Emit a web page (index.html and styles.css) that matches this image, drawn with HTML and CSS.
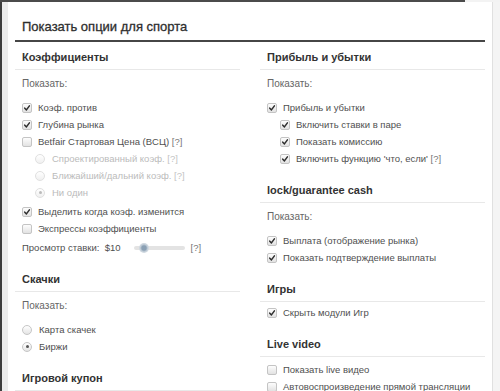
FILE: index.html
```html
<!DOCTYPE html>
<html lang="ru">
<head>
<meta charset="utf-8">
<link rel="stylesheet" href="styles.css">
</head>
<body>
<div class="topline"></div>
<div class="page">
  <div class="lstrip"></div>
  <div class="panel">
    <h1 class="title">Показать опции для спорта</h1>
    <div class="cols">
      <div class="col">
        <section class="sec">
          <h2 class="sh">Коэффициенты</h2>
          <div class="lbl">Показать:</div>
          <ul class="opts">
            <li class="row"><span class="cb on"><svg viewBox="0 0 10 10"><path d="M2.2 5.2 L4.3 7.4 L8 2.4"/></svg></span>Коэф. против</li>
            <li class="row"><span class="cb on"><svg viewBox="0 0 10 10"><path d="M2.2 5.2 L4.3 7.4 L8 2.4"/></svg></span>Глубина рынка</li>
            <li class="row"><span class="cb"></span>Betfair Стартовая Цена (BCЦ)&nbsp;<span class="q">[?]</span></li>
            <li class="radios">
              <div class="row sub dis"><span class="rd"></span>Спроектированный коэф. <span class="q">&nbsp;[?]</span></div>
              <div class="row sub dis"><span class="rd"></span>Ближайший/дальний коэф. <span class="q">&nbsp;[?]</span></div>
              <div class="row sub dis"><span class="rd on"></span>Ни один</div>
            </li>
            <li class="row"><span class="cb on"><svg viewBox="0 0 10 10"><path d="M2.2 5.2 L4.3 7.4 L8 2.4"/></svg></span>Выделить когда коэф. изменится</li>
            <li class="row"><span class="cb"></span>Экспрессы коэффициенты</li>
            <li class="row slrow">Просмотр ставки:&nbsp; $10<span class="track"><span class="knob"></span></span><span class="q">[?]</span></li>
          </ul>
        </section>
        <section class="sec">
          <h2 class="sh">Скачки</h2>
          <div class="lbl">Показать:</div>
          <ul class="opts">
            <li class="row"><span class="rd"></span>Карта скачек</li>
            <li class="row"><span class="rd on"></span>Биржи</li>
          </ul>
        </section>
        <section class="sec">
          <h2 class="sh">Игровой купон</h2>
        </section>
      </div>
      <div class="col">
        <section class="sec">
          <h2 class="sh">Прибыль и убытки</h2>
          <div class="lbl">Показать:</div>
          <ul class="opts">
            <li class="row"><span class="cb on"><svg viewBox="0 0 10 10"><path d="M2.2 5.2 L4.3 7.4 L8 2.4"/></svg></span>Прибыль и убытки</li>
            <li class="row sub"><span class="cb on"><svg viewBox="0 0 10 10"><path d="M2.2 5.2 L4.3 7.4 L8 2.4"/></svg></span>Включить ставки в паре</li>
            <li class="row sub"><span class="cb on"><svg viewBox="0 0 10 10"><path d="M2.2 5.2 L4.3 7.4 L8 2.4"/></svg></span>Показать комиссию</li>
            <li class="row sub"><span class="cb on"><svg viewBox="0 0 10 10"><path d="M2.2 5.2 L4.3 7.4 L8 2.4"/></svg></span>Включить функцию 'что, если'&nbsp;<span class="q">[?]</span></li>
          </ul>
        </section>
        <section class="sec">
          <h2 class="sh">lock/guarantee cash</h2>
          <div class="lbl">Показать:</div>
          <ul class="opts">
            <li class="row"><span class="cb on"><svg viewBox="0 0 10 10"><path d="M2.2 5.2 L4.3 7.4 L8 2.4"/></svg></span>Выплата (отображение рынка)</li>
            <li class="row"><span class="cb on"><svg viewBox="0 0 10 10"><path d="M2.2 5.2 L4.3 7.4 L8 2.4"/></svg></span>Показать подтверждение выплаты</li>
          </ul>
        </section>
        <section class="sec">
          <h2 class="sh">Игры</h2>
          <ul class="opts tight">
            <li class="row"><span class="cb on"><svg viewBox="0 0 10 10"><path d="M2.2 5.2 L4.3 7.4 L8 2.4"/></svg></span>Скрыть модули Игр</li>
          </ul>
        </section>
        <section class="sec">
          <h2 class="sh">Live video</h2>
          <ul class="opts tight2">
            <li class="row"><span class="cb"></span>Показать live видео</li>
            <li class="row"><span class="cb"></span>Автовоспроизведение прямой трансляции</li>
          </ul>
        </section>
      </div>
    </div>
  </div>
  <div class="rstrip"></div>
</div>
</body>
</html>
```
FILE: styles.css
```css
html, body {
  margin: 0;
  padding: 0;
}
body {
  width: 500px;
  height: 391px;
  overflow: hidden;
  background: #f3f3f3;
  font-family: "Liberation Sans", Arial, sans-serif;
}
.topline {
  width: 465px;
  height: 2px;
  background: #4b4b4b;
}
.page {
  display: flex;
  height: 389px;
}
.lstrip {
  width: 6px;
  border-left: 2px solid #3d3d3d;
  background: #ececec;
}
.panel {
  width: 470px;
  padding: 0 7px;
  background: #fff;
}
.rstrip {
  flex: 1;
  border-left: 1px solid #e0e0e0;
  background: #f4f4f4;
}
.title {
  margin: 0;
  padding: 15px 0 3px 7px;
  font-size: 13px;
  line-height: 20px;
  font-weight: 400;
  color: #2e2e2e;
  -webkit-text-stroke: 0.3px #2e2e2e;
  border-bottom: 2px solid #464646;
}
.cols {
  display: grid;
  grid-template-columns: 225px 225px;
  column-gap: 20px;
}
.sec + .sec {
  margin-top: 8px;
}
.sh {
  margin: 0;
  padding: 7px 0 4px 7px;
  font-size: 11px;
  line-height: 16px;
  font-weight: 700;
  color: #333;
  border-bottom: 1px solid #e8e8e8;
}
.lbl {
  margin-top: 5px;
  padding-left: 7px;
  font-size: 10px;
  line-height: 17px;
  color: #666;
}
.opts {
  list-style: none;
  margin: 7px 0 0;
  padding: 0 0 0 7px;
}
.opts.tight {
  margin-top: 2px;
}
.opts.tight2 {
  margin-top: 4px;
}
.row {
  display: flex;
  align-items: center;
  height: 17px;
  font-size: 9.5px;
  color: #4f4f4f;
  white-space: nowrap;
}
.sub {
  padding-left: 13px;
}
.radios {
  margin-bottom: 2px;
}
.dis {
  color: #bbb;
}
.dis .q {
  color: #c4c4c4;
}
.q {
  color: #777;
}
.cb {
  flex: none;
  width: 8px;
  height: 8px;
  margin-right: 6px;
  border: 1px solid #c4c4c4;
  border-radius: 2px;
  background: linear-gradient(#fdfdfd, #e2e2e2);
  display: flex;
}
.cb svg {
  width: 8px;
  height: 8px;
}
.cb path {
  fill: none;
  stroke: #2e2e2e;
  stroke-width: 1.9;
  stroke-linecap: round;
  stroke-linejoin: round;
}
.rd {
  flex: none;
  width: 8px;
  height: 8px;
  margin-right: 7px;
  border: 1px solid #c6c6c6;
  border-radius: 50%;
  background: linear-gradient(#fff, #e4e4e4);
  display: flex;
  align-items: center;
  justify-content: center;
}
.rd.on::after {
  content: "";
  width: 3px;
  height: 3px;
  border-radius: 50%;
  background: #555;
}
.dis .rd {
  border-color: #e0e0e0;
  background: linear-gradient(#fff, #f0f0f0);
}
.dis .rd.on::after {
  background: #bbb;
}
.slrow {
  margin-top: 2px;
}
.track {
  position: relative;
  width: 51px;
  height: 4px;
  margin: 0 6px 0 13px;
  border-radius: 2px;
  background: #e3e3e3;
}
.knob {
  position: absolute;
  left: 5px;
  top: -3px;
  width: 10px;
  height: 10px;
  border-radius: 50%;
  background: radial-gradient(circle, #8aa0b4 0 30%, #c9d3dc 55%, #e4e9ee 100%);
}
```
